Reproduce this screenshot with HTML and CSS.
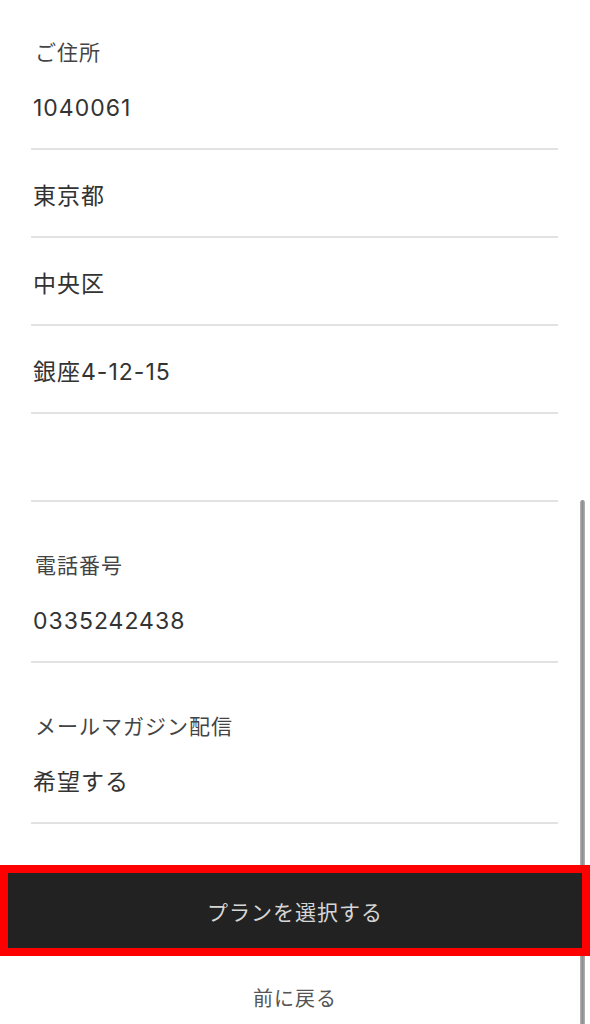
FILE: index.html
```html
<!DOCTYPE html>
<html lang="ja">

<head>
    <meta charset="UTF-8">
    <title>ご登録内容の確認</title>
    <link rel="stylesheet" href="styles.css">
</head>

<body>

    <main class="form">
        <section class="group">
            <p class="label">ご住所</p>
            <div class="field">1040061</div>
            <div class="field">東京都</div>
            <div class="field">中央区</div>
            <div class="field">銀座4-12-15</div>
            <div class="field"></div>
        </section>

        <section class="group">
            <p class="label">電話番号</p>
            <div class="field">0335242438</div>
        </section>

        <section class="group">
            <p class="label">メールマガジン配信</p>
            <div class="field">希望する</div>
        </section>
    </main>

    <div class="actions">
        <button class="submit" type="button">プランを選択する</button>
        <a class="back" href="#">前に戻る</a>
    </div>

    <!-- page scroll indicator -->
    <div class="scrollbar"></div>

</body>

</html>
```

FILE: styles.css
```css
body {
    font-family: 'Inter', 'Noto Sans CJK JP', sans-serif;
    background-color: #fff;
    color: #333;
    margin: 0;
    padding: 0;
    height: 1024px;
    overflow: hidden;
    position: relative;
}

.form {
    padding: 0 32px 0 31px;
}

.group {
    display: flex;
    flex-direction: column;
    margin-top: 55px;
}

.group:first-child {
    margin-top: 44px;
}

.label {
    margin: 0;
    padding-left: 4px;
    font-size: 21px;
    line-height: 18px;
    letter-spacing: 1px;
    color: #444;
}

.field {
    padding: 30px 0 24px 2px;
    height: 32px;
    font-size: 23px;
    line-height: 32px;
    letter-spacing: 1px;
    border-bottom: 2px solid #e2e2e2;
}

.actions {
    display: flex;
    flex-direction: column;
    align-items: center;
    margin-top: 41px;
}

.submit {
    position: relative;
    z-index: 1;
    width: 100%;
    height: 91px;
    background-color: #222;
    color: #d6d6d6;
    border: 8px solid #ff0000;
    font-family: inherit;
    font-size: 21px;
    letter-spacing: 1px;
    cursor: pointer;
}

.back {
    margin-top: 27px;
    font-size: 20px;
    line-height: 32px;
    letter-spacing: 1px;
    color: #555;
    text-decoration: none;
}

.scrollbar {
    position: absolute;
    top: 500px;
    left: 580px;
    width: 5px;
    height: 524px;
    border-radius: 3px 3px 0 0;
    background: linear-gradient(to right, #b5b5b5, #8c8c8c 50%, #b5b5b5);
}
```
